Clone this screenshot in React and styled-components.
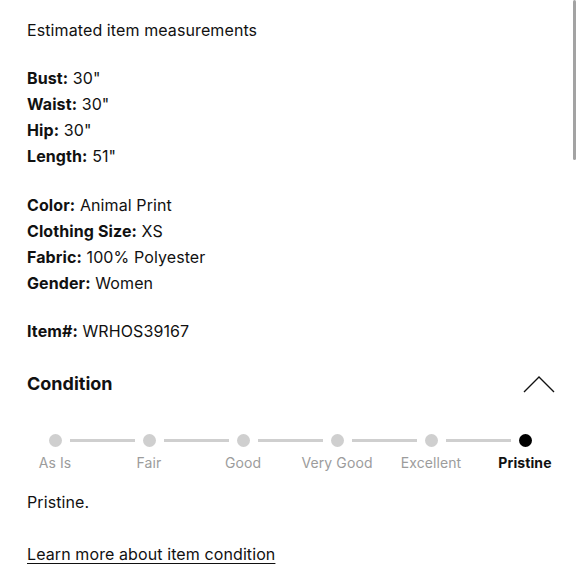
import React from "react";
import styled, { createGlobalStyle } from "styled-components";

const GlobalStyle = createGlobalStyle`
  body {
    margin: 0;
    background: #fff;
    font-family: Inter, "Noto Sans", sans-serif;
    color: #111;
  }
`;

const Page = styled.div`
  position: relative;
  padding: 17px 27px 20px;
  font-size: 16px;
  line-height: 26px;
  letter-spacing: 0.1px;
`;

const ScrollThumb = styled.div`
  position: absolute;
  top: 0;
  right: 4px;
  width: 3px;
  height: 160px;
  border-radius: 2px;
  background: #a3a3a3;
`;

const Block = styled.div`
  margin-top: ${(p) => p.$gap || 0}px;
`;

const Line = styled.div`
  white-space: nowrap;
`;

const Label = styled.b`
  font-weight: 700;
`;

const Header = styled.div`
  display: flex;
  align-items: center;
  justify-content: space-between;
  margin-top: 27px;
`;

const Heading = styled.h2`
  margin: 0;
  font-size: 18px;
  line-height: 26px;
  font-weight: 700;
  letter-spacing: 0;
`;

const Chevron = styled.svg`
  width: 32px;
  height: 20px;
  margin-right: -2px;
`;

const Stepper = styled.div`
  display: grid;
  grid-template-columns: repeat(6, 1fr);
  margin: 37px -19px 0;
`;

const Step = styled.div`
  display: flex;
  flex-direction: column;
  align-items: center;
`;

const Track = styled.div`
  display: flex;
  align-items: center;
  align-self: stretch;
  gap: 8px;
  height: 13px;
`;

const Rail = styled.div`
  flex: 1;
  height: 2.5px;
  background: ${(p) => (p.$hidden ? "transparent" : "#cfcfcf")};
`;

const Dot = styled.div`
  width: 13px;
  height: 13px;
  border-radius: 50%;
  background: ${(p) => (p.$active ? "#000" : "#cfcfcf")};
`;

const StepLabel = styled.div`
  margin-top: 6px;
  font-size: 14px;
  line-height: 20px;
  color: ${(p) => (p.$active ? "#111" : "#9c9c9c")};
  font-weight: ${(p) => (p.$active ? 700 : 400)};
  white-space: nowrap;
`;

const Text = styled.p`
  margin: 16px 0 0;
`;

const LearnLink = styled.a`
  display: inline-block;
  margin-top: 26px;
  color: #111;
  text-decoration: underline;
  text-underline-offset: 3px;
  text-decoration-thickness: 1px;
`;

const measurements = [
  ["Bust", '30"'],
  ["Waist", '30"'],
  ["Hip", '30"'],
  ["Length", '51"'],
];

const details = [
  ["Color", "Animal Print"],
  ["Clothing Size", "XS"],
  ["Fabric", "100% Polyester"],
  ["Gender", "Women"],
];

const steps = ["As Is", "Fair", "Good", "Very Good", "Excellent", "Pristine"];

export default function App() {
  const active = steps.length - 1;
  return (
    <Page>
      <GlobalStyle />
      <ScrollThumb />
      <Line>Estimated item measurements</Line>
      <Block $gap={22}>
        {measurements.map(([k, v]) => (
          <Line key={k}>
            <Label>{k}:</Label> {v}
          </Line>
        ))}
      </Block>
      <Block $gap={23}>
        {details.map(([k, v]) => (
          <Line key={k}>
            <Label>{k}:</Label> {v}
          </Line>
        ))}
      </Block>
      <Block $gap={22}>
        <Line>
          <Label>Item#:</Label> WRHOS39167
        </Line>
      </Block>
      <Header>
        <Heading>Condition</Heading>
        <Chevron viewBox="0 0 32 20">
          <polyline
            points="1,18 16,3 31,18"
            fill="none"
            stroke="#111"
            strokeWidth="1.4"
          />
        </Chevron>
      </Header>
      <Stepper>
        {steps.map((s, i) => (
          <Step key={s}>
            <Track>
              <Rail $hidden={i === 0} />
              <Dot $active={i === active} />
              <Rail $hidden={i === steps.length - 1} />
            </Track>
            <StepLabel $active={i === active}>{s}</StepLabel>
          </Step>
        ))}
      </Stepper>
      <Text>Pristine.</Text>
      <LearnLink href="#">Learn more about item condition</LearnLink>
    </Page>
  );
}
